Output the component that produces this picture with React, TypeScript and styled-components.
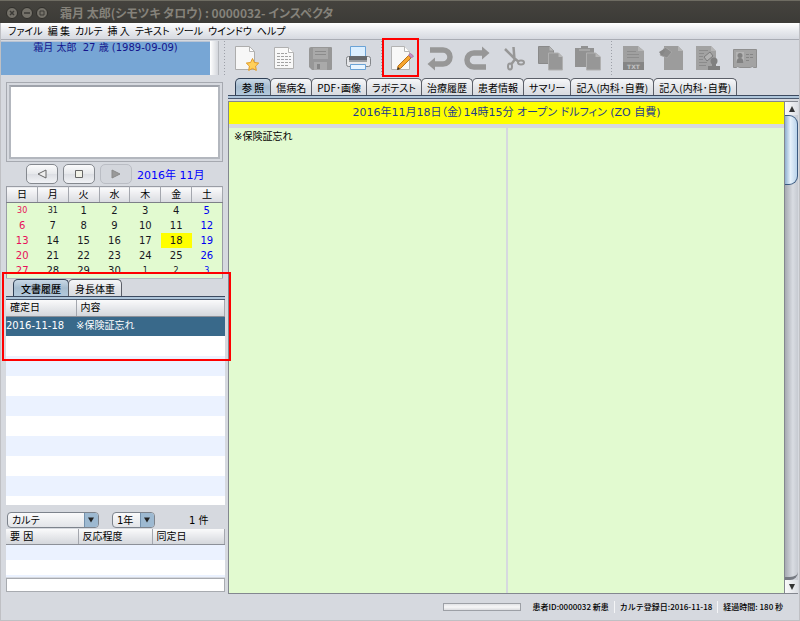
import React from 'react';
import styled, { createGlobalStyle, css } from 'styled-components';

const Global = createGlobalStyle`
  *, *::before, *::after { box-sizing: border-box; }
  body { margin: 0; background: #d6d9df; }
  body, button, input, select, textarea {
    font-family: "DejaVu Sans", "Noto Sans CJK JP", sans-serif;
    font-size: 10px;
    line-height: 14px;
    color: #000;
  }
  button { padding: 0; border: 0; background: none; }
  svg { display: block; }
`;

const Window = styled.div`
  min-height: 100vh;
  display: flex;
  flex-direction: column;
  background: #d6d9df;
  border: 1px solid #bfc0c4;
  border-top: 0;
`;

/* ---------- title bar and menu ---------- */

const TitleBar = styled.header`
  height: 23px;
  display: flex;
  align-items: center;
  gap: 3px;
  padding: 1px 0 0 6px;
  margin: 0 -1px;
  background: linear-gradient(#45433e, #3c3b37);
  border-top: 1px solid #6e6c62;
`;

const WindowButton = styled.button`
  width: 12px;
  height: 12px;
  border-radius: 50%;
  background: #75726a;
  border: 1px solid #2f2e2a;
  svg { width: 10px; height: 10px; }
`;

const Title = styled.h1`
  margin: 0 0 0 9px;
  font: bold 12px/18px "Noto Sans CJK JP", sans-serif;
  font-feature-settings: "palt";
  color: #85827a;
  white-space: pre;
`;

const MenuBar = styled.nav`
  height: 17px;
  display: flex;
  align-items: center;
  gap: 5px;
  padding-left: 7px;
  background: linear-gradient(#fff, #e8eaee 50%, #d6d9e0);
  border-bottom: 1px solid #a9acb4;
`;

const MenuItem = styled.button`
  font: 10px/14px "Noto Sans CJK JP", sans-serif;
  font-feature-settings: "palt";
  white-space: pre;
`;

/* ---------- frame ---------- */

const Body = styled.div`
  flex: 1;
  display: grid;
  grid-template-columns: 227px minmax(0, 1fr);
`;

const Sidebar = styled.aside`
  display: flex;
  flex-direction: column;
  min-width: 0;
`;

const Main = styled.main`
  display: flex;
  flex-direction: column;
  min-width: 0;
`;

/* ---------- sidebar: patient, memo, calendar ---------- */

const PatientBar = styled.div`
  height: 34px;
  margin: 1px 2px 0 0;
  display: flex;
`;

const Patient = styled.div`
  flex: 1;
  background: #77a6d5;
  border-top: 1px solid #b9c4d4;
  color: #14148c;
  text-align: center;
  line-height: 12px;
  white-space: pre;
`;

const PatientEdge = styled.div`
  width: 9px;
  background: linear-gradient(90deg, #fff, #d3d6dc);
  border-right: 1px solid #b4b7bd;
`;

const MemoFrame = styled.div`
  display: flex;
  margin: 7px 5px 0;
  padding: 2px;
  border: 1px solid #a6a9b0;
`;

const Memo = styled.textarea`
  flex: 1;
  min-width: 0;
  height: 74px;
  border: 2px solid #b3b7be;
  border-top-color: #9fa3ab;
  background: #fff;
  resize: none;
  outline: 0;
`;

const CalendarNav = styled.div`
  display: flex;
  align-items: center;
  gap: 5px;
  margin: 2px 0 2px 25px;
`;

const NavButton = styled.button`
  width: 32px;
  height: 20px;
  display: grid;
  place-items: center;
  border: 1px solid #85898f;
  border-radius: 5px;
  background: linear-gradient(#fbfbfc, #e6e8eb 50%, #dcdee3 51%, #f2f3f6);
  &:disabled { border-color: #babdc4; background: #d3d6dc; }
`;

const Month = styled.span`
  padding-top: 3px;
  font-size: 11px;
  line-height: 16px;
  color: #00f;
  white-space: pre;
`;

const Calendar = styled.table`
  width: 217px;
  margin-left: 5px;
  table-layout: fixed;
  border-collapse: collapse;
  background: #e2fad0;
  border: 1px solid #9a9da5;
  border-bottom-color: #b6bac2;
`;

const WeekHead = styled.th`
  height: 16px;
  padding: 0;
  font-weight: normal;
  line-height: 15px;
  background: linear-gradient(#fbfbfc, #d9dbe0);
  border-right: 1px solid #a4a7ae;
  border-bottom: 1px solid #7d8088;
`;

type DayTone = 'sun' | 'week' | 'sat';
const dayColor = { sun: '#e8105a', week: '#17171f', sat: '#0000f0' };

const Day = styled.td<{ $tone: DayTone; $other: boolean; $today: boolean }>`
  height: 15px;
  padding: 0;
  text-align: center;
  line-height: 15px;
  font-size: ${p => (p.$other ? 8 : 10)}px;
  color: ${p => dayColor[p.$tone]};
  background: ${p => (p.$today ? '#ff0' : 'transparent')};
`;

/* ---------- tabs ---------- */

const Tabs = styled.div<{ $indent: number }>`
  display: flex;
  align-items: flex-end;
  padding-left: ${p => p.$indent}px;
  border-bottom: 1px solid #3c4a60;
`;

const Tab = styled.button<{ $active?: boolean }>`
  height: 17px;
  padding: 0 5px;
  border: 1px solid #5b5f68;
  border-bottom: 0;
  border-radius: 5px 5px 0 0;
  margin-right: -1px;
  font: 10px/15px "Noto Sans CJK JP", sans-serif;
  font-feature-settings: "palt";
  white-space: pre;
  background: linear-gradient(#f6f7f9, #e4e6ea 50%, #d8dbe0);
  ${p => p.$active && css`
    padding: 0 6px;
    font-weight: 500;
    border-color: #2f3f55;
    background: linear-gradient(#c9d8e6, #a6bccf 50%, #b3c9dc);
  `}
`;

const SideTab = styled(Tab)`
  padding: 0 ${p => (p.$active ? 7 : 6)}px;
`;

const TabRail = styled.div`
  height: 3px;
  background: #aec5da;
  border-bottom: 1px solid #4b5a70;
`;

/* ---------- sidebar: history ---------- */

const History = styled.section`
  position: relative;
  flex: 1;
  display: flex;
  flex-direction: column;
  margin: 0 3px 0 5px;
`;

const Highlight = styled.div`
  position: absolute;
  z-index: 2;
  inset: -7px -6px auto -4px;
  height: 89px;
  border: 2px solid #f00;
  pointer-events: none;
`;

const Grid = styled.table`
  width: 100%;
  table-layout: fixed;
  border-collapse: collapse;
`;

const HeadCell = styled.th<{ $width?: number }>`
  height: 16px;
  width: ${p => (p.$width ? `${p.$width}px` : 'auto')};
  padding: 1px 0 0 4px;
  text-align: left;
  font-weight: normal;
  line-height: 14px;
  white-space: pre;
  background: linear-gradient(#fafafb, #d4d7dc);
  border-right: 1px solid #a4a7ae;
  border-bottom: 1px solid #8c9098;
`;

const SelectedCell = styled.td`
  height: 20px;
  padding: 0;
  color: #fff;
  background: #39698a;
`;

const Stripes = styled.div<{ $step: number; $first: string; $second: string; $fixed?: number }>`
  flex: ${p => (p.$fixed ? 'none' : '1')};
  height: ${p => (p.$fixed ? `${p.$fixed}px` : 'auto')};
  background: repeating-linear-gradient(
    ${p => p.$first} 0 ${p => p.$step}px,
    ${p => p.$second} ${p => p.$step}px ${p => p.$step * 2}px
  );
`;

const FilterRow = styled.div`
  display: flex;
  align-items: center;
  gap: 13px;
  margin: 7px 0 1px 6px;
`;

const SelectBox = styled.span<{ $width: number }>`
  position: relative;
  width: ${p => p.$width}px;
  select {
    display: block;
    width: 100%;
    height: 16px;
    padding: 1px 0 0 4px;
    appearance: none;
    border: 1px solid #7d838c;
    border-radius: 4px;
    font: 10px/14px "DejaVu Sans", "Noto Sans CJK JP", sans-serif;
    font-feature-settings: "palt";
    background: linear-gradient(#fafafb, #e2e4e8);
  }
  svg {
    position: absolute;
    right: 1px;
    top: 1px;
    pointer-events: none;
  }
`;

const Count = styled.span`
  margin-left: 21px;
  padding-top: 2px;
  white-space: pre;
`;

const Allergy = styled.section`
  margin: 0 3px 2px 5px;
`;

const NoteInput = styled.input`
  display: block;
  width: 100%;
  height: 14px;
  margin-top: 1px;
  border: 1px solid #a8abb0;
  background: #fff;
  outline: 0;
`;

/* ---------- toolbar ---------- */

const Toolbar = styled.div`
  height: 35px;
  display: flex;
  align-items: center;
`;

const Divider = styled.span<{ $width: number }>`
  flex: none;
  width: ${p => p.$width}px;
  height: 34px;
  background: repeating-linear-gradient(#9da0a8 0 1px, #d6d9df 1px 3px) 5px 0 / 1px 100% no-repeat;
`;

const ToolButton = styled.button<{ $marked?: boolean }>`
  position: relative;
  flex: none;
  width: 37px;
  height: 35px;
  display: grid;
  place-items: center;
  ${p => p.$marked && css`
    margin-right: 2px;
    &::after {
      content: "";
      position: absolute;
      inset: -2px 0;
      border: 2px solid #f00;
    }
  `}
`;

/* ---------- document ---------- */

const TabArea = styled.div`
  margin-top: 3px;
`;

const Document = styled.div`
  flex: 1;
  display: grid;
  grid-template-columns: minmax(0, 1fr) 13px;
  margin: 2px 1px 0 0;
  border: 1px solid #83878f;
  border-right: 0;
`;

const Sheet = styled.article`
  display: flex;
  flex-direction: column;
  border-right: 1px solid #83878f;
`;

const SheetTitle = styled.h2`
  margin: 0;
  height: 22px;
  text-align: center;
  font: 11px/22px "DejaVu Sans", "Noto Sans CJK JP", sans-serif;
  font-feature-settings: "palt";
  color: #1e3c8c;
  background: #ff0;
  white-space: pre;
`;

const Panes = styled.div`
  flex: 1;
  margin-top: 4px;
  display: grid;
  grid-template-columns: 1fr 1fr;
  gap: 2px;
`;

const Pane = styled.div`
  padding: 2px 5px;
  background: #e2fad0;
  font-feature-settings: "palt";
`;

const ScrollBar = styled.div`
  display: flex;
  flex-direction: column;
  align-items: stretch;
  background: linear-gradient(90deg, #a6aab2, #d9dce2 60%, #c6cad1);
`;

const ScrollArrow = styled.button`
  height: 13px;
  display: grid;
  place-items: center;
  background: linear-gradient(90deg, #fafafb, #dcdfe4);
`;

const ScrollThumb = styled.div`
  height: 70px;
  border: 1px solid #3a5a80;
  border-left: 0;
  border-radius: 0 9px 9px 0;
  background: linear-gradient(90deg, #8fb0d0, #e6f1fb 45%, #b9d3ea);
`;

const ScrollTrack = styled.div`
  flex: 1;
  border-bottom: 3px solid #777b83;
  border-radius: 0 0 8px 0;
`;

/* ---------- status bar ---------- */

const StatusBar = styled.footer`
  height: 26px;
  display: flex;
  align-items: center;
  justify-content: flex-end;
  padding-right: 16px;
`;

const Progress = styled.div`
  width: 78px;
  height: 8px;
  margin-right: 12px;
  border: 1px solid #9da0a6;
  background: linear-gradient(#e2e3e6, #f7f7f8 50%, #dcdde0);
`;

const StatusItem = styled.span`
  font: 500 8px/12px "Noto Sans CJK JP", sans-serif;
  white-space: pre;
  & + & {
    margin-left: 5px;
    padding-left: 5px;
    border-left: 1px solid #f4f5f7;
  }
`;

/* ---------- icons ---------- */

const G = '#979797';

const Svg = ({ children }: { children: React.ReactNode }) => (
  <svg width="26" height="26" viewBox="0 0 26 26" fill="none">{children}</svg>
);

const NewDoc = () => (
  <Svg>
    <path d="M1.500 1.500h14l5 5v18h-19z" fill="#f7f7f7" stroke="#adadad" />
    <path d="M15.500 1.500v5h5z" fill="#fff" stroke="#b5b5b5" />
    <path d="M18.500 13.500l1.900 4 4.300.6-3.100 3 .7 4.300-3.800-2-3.800 2 .7-4.300-3.100-3 4.300-.6z" fill="#ffd05a" stroke="#e09a26" />
  </Svg>
);

const TextDoc = () => (
  <Svg>
    <path d="M3.500 2.500h14l5 5v16h-19z" fill="#f8f8f8" stroke="#b0b0b0" />
    <path d="M17.500 2.500v5h5" fill="#fff" stroke="#b5b5b5" />
    <path d="M6 8.500h10M6 11.500h14M6 14.500h14M6 17.500h14M6 20.500h11" stroke="#a2a2a2" strokeDasharray="3 1" />
  </Svg>
);

const Floppy = () => (
  <Svg>
    <path d="M3 2h20q1 0 1 1v21q0 1-1 1H4l-3-3V4q0-2 2-2z" fill={G} />
    <path d="M5 3h15v11H5z" fill="#a9a9a9" />
    <path d="M7 6.500h11M7 9.500h11" stroke="#8b8b8b" />
    <path d="M6 17h13v8H6z" fill="#aaa" />
    <path d="M9 19h3v5H9z" fill="#858585" />
  </Svg>
);

const Printer = () => (
  <Svg>
    <rect x="1.500" y="11.500" width="24" height="10" rx="2" fill="#e6e7ea" stroke="#83868a" />
    <path d="M5.500 1.500h15v10h-15z" fill="#dcefff" stroke="#6ba3d6" />
    <path d="M4 11h18v4H4z" fill="#66696d" />
    <path d="M4 15h18v2H4z" fill="#9a9da1" />
    <path d="M5.500 19.500h15v5h-15z" fill="#e8f5ff" stroke="#6ba3d6" />
  </Svg>
);

const EditDoc = () => (
  <Svg>
    <path d="M3.500 1.500h13l5 5v18h-18z" fill="#f8f8f8" stroke="#b3b3b3" />
    <path d="M16.500 1.500v5h5" fill="#fff" stroke="#b5b5b5" />
    <path d="M10 21L20.500 10.500l2.500 2.500L12.500 23.500l-3 1z" fill="#f7a52f" stroke="#b9741b" />
    <path d="M20.500 10l2-1.500 3 2.500-2 2z" fill="#c68bc4" stroke="#a976a8" />
    <path d="M9 25l1-3 2 2z" fill="#333" />
  </Svg>
);

const Undo = () => (
  <Svg>
    <path d="M3 5h13a7 7 0 0 1 0 14H7" stroke={G} strokeWidth="5.500" />
    <path d="M0.500 19L8 12.500v13z" fill={G} />
  </Svg>
);

const Redo = () => (
  <Svg>
    <path d="M22 22H10a7 7 0 0 1 0-14h8" stroke={G} strokeWidth="5.500" />
    <path d="M25.500 8L18 1.500v13z" fill={G} />
  </Svg>
);

const Scissors = () => (
  <Svg>
    <path d="M12.500 2l1 13-3 4M4 4l9 9 5 4" stroke={G} strokeWidth="2.500" />
    <ellipse cx="9" cy="21.500" rx="2" ry="3" stroke={G} strokeWidth="2" />
    <ellipse cx="20" cy="17.500" rx="3" ry="2" stroke={G} strokeWidth="2" />
  </Svg>
);

const Copy = () => (
  <Svg>
    <path d="M0.500 1.500h11l4 4v13h-15z" fill={G} stroke="#8a8a8a" />
    <path d="M11.500 1.500v4h4" fill="#b8b8b8" />
    <path d="M10.500 8h10l4 4v13h-14z" fill={G} stroke="#b0b0b0" />
    <path d="M20.500 8v4h4" fill="#b8b8b8" />
  </Svg>
);

const Paste = () => (
  <Svg>
    <path d="M0 3h6V1h7v2h6v19H0z" fill="#929292" />
    <path d="M4 5h11" stroke="#a6a6a6" strokeWidth="2" />
    <path d="M11.500 8h9l5 4v13h-14z" fill={G} stroke="#b0b0b0" />
    <path d="M20.500 8v4h5" fill="#b8b8b8" />
  </Svg>
);

const TxtFile = () => (
  <Svg>
    <path d="M2 1h15l6 5v19H2z" fill="#a0a0a0" />
    <path d="M17 1v5h6z" fill="#b5b5b5" />
    <path d="M6 6.500h9M6 9.500h12M6 12.500h12" stroke="#8d8d8d" />
    <path d="M2 17h21v8H2z" fill="#858585" />
    <text x="12.500" y="23.500" fontSize="6" fontWeight="bold" textAnchor="middle" fill="#c2c2c2" fontFamily="DejaVu Sans, sans-serif">TXT</text>
  </Svg>
);

const PaintDoc = () => (
  <Svg>
    <path d="M6 1h14l5 5v19H6z" fill="#9c9c9c" />
    <path d="M20 1v5h5z" fill="#b4b4b4" />
    <path d="M7 2l7 5-5 6-7-3z" fill="#8c8c8c" stroke="#a6a6a6" />
    <path d="M1 7l5-3 1 2-3 5z" fill="#868686" />
  </Svg>
);

const StampDoc = () => (
  <Svg>
    <path d="M1 1h15l5 5v19H1z" fill="#a2a2a2" />
    <path d="M16 1v5h5z" fill="#b5b5b5" />
    <path d="M4 5.500h9M4 8.500h5M4 11.500h4M4 14.500h4M4 17.500h8M4 20.500h7" stroke="#8b8b8b" />
    <path d="M9 12l6-5 3 4-6 5z" stroke="#7c7c7c" fill="#b2b2b2" />
    <circle cx="19" cy="16" r="3.500" fill="#808080" />
    <path d="M17 18h4v3h4v4H13v-4h4z" fill="#808080" />
  </Svg>
);

const IdCard = () => (
  <Svg>
    <path d="M1.500 4.500h23v18h-3q-1-2-3 0h-11q-2-2-3 0h-3z" fill="#a3a3a3" stroke="#8f8f8f" />
    <path d="M4 7h8v11H4z" fill="#b4b4b4" />
    <circle cx="8" cy="10.500" r="2.500" fill="#818181" />
    <path d="M4.500 18q0-5 3.500-5t3.500 5z" fill="#818181" />
    <path d="M14 9.500h8M14 12.500h8M14 15.500h4" stroke="#858585" strokeDasharray="3 1" />
  </Svg>
);

const toolGroups: { label: string; icon: React.FC; marked?: boolean }[][] = [
  [
    { label: '新規', icon: NewDoc },
    { label: '開く', icon: TextDoc },
    { label: '保存', icon: Floppy },
    { label: '印刷', icon: Printer },
  ],
  [
    { label: '編集', icon: EditDoc, marked: true },
    { label: '元に戻す', icon: Undo },
    { label: 'やり直し', icon: Redo },
    { label: '切り取り', icon: Scissors },
    { label: 'コピー', icon: Copy },
    { label: '貼り付け', icon: Paste },
  ],
  [
    { label: 'テキスト', icon: TxtFile },
    { label: 'シェーマ', icon: PaintDoc },
    { label: 'スタンプ', icon: StampDoc },
    { label: '保険', icon: IdCard },
  ],
];

const menus = ['ファイル', '編 集', 'カルテ', '挿 入', 'テキスト', 'ツール', 'ウインドウ', 'ヘルプ'];
const chartTabs = ['参 照', '傷病名', 'PDF･画像', 'ラボテスト', '治療履歴', '患者情報', 'サマリー', '記入(内科･自費)', '記入(内科･自費)'];
const weekdays = ['日', '月', '火', '水', '木', '金', '土'];
const firstSunday = new Date(2016, 9, 30);

const weeks = Array.from({ length: 5 }, (_, w) =>
  Array.from({ length: 7 }, (_, d) => {
    const date = new Date(firstSunday);
    date.setDate(date.getDate() + w * 7 + d);
    return {
      day: date.getDate(),
      other: date.getMonth() !== 10,
      tone: (d === 0 ? 'sun' : d === 6 ? 'sat' : 'week') as DayTone,
    };
  }),
);

const SelectArrow = () => (
  <svg width="14" height="14" viewBox="0 0 14 14">
    <path d="M0 0h11q3 0 3 3v8q0 3-3 3H0z" fill="#9db9d1" />
    <path d="M.5 0v14" stroke="#7391ad" />
    <path d="M4 4.500h6l-3 5z" fill="#222" />
  </svg>
);

export default function App() {
  return (
    <Window>
      <Global />
      <TitleBar>
        <WindowButton aria-label="閉じる">
          <svg viewBox="0 0 10 10"><path d="M3 3l4 4M7 3L3 7" stroke="#3c3b37" strokeWidth="1.500" /></svg>
        </WindowButton>
        <WindowButton aria-label="最小化">
          <svg viewBox="0 0 10 10"><path d="M2 5h6" stroke="#3c3b37" strokeWidth="1.500" /></svg>
        </WindowButton>
        <WindowButton aria-label="最大化">
          <svg viewBox="0 0 10 10"><path d="M3 3h4v4H3z" stroke="#3c3b37" fill="none" /></svg>
        </WindowButton>
        <Title>霜月 太郎(シモツキ タロウ) : 0000032- インスペクタ</Title>
      </TitleBar>
      <MenuBar>
        {menus.map(m => <MenuItem key={m}>{m}</MenuItem>)}
      </MenuBar>

      <Body>
        <Sidebar>
          <PatientBar>
            <Patient>霜月 太郎  27 歳 (1989-09-09)</Patient>
            <PatientEdge />
            <Divider $width={7} />
          </PatientBar>
          <MemoFrame><Memo aria-label="メモ" /></MemoFrame>
          <CalendarNav>
            <NavButton aria-label="前の月">
              <svg width="10" height="10" viewBox="0 0 10 10"><path d="M9 1v8L1 5z" fill="#eee" stroke="#666" /></svg>
            </NavButton>
            <NavButton aria-label="今月">
              <svg width="10" height="10" viewBox="0 0 10 10"><path d="M1.500 1.500h7v7h-7z" fill="#f2f2e8" stroke="#666" /></svg>
            </NavButton>
            <NavButton aria-label="次の月" disabled>
              <svg width="10" height="10" viewBox="0 0 10 10"><path d="M1 1v8l8-4z" fill="#999" stroke="#8a8a8a" /></svg>
            </NavButton>
            <Month>2016年 11月</Month>
          </CalendarNav>
          <Calendar>
            <thead>
              <tr>{weekdays.map(d => <WeekHead key={d}>{d}</WeekHead>)}</tr>
            </thead>
            <tbody>
              {weeks.map((week, i) => (
                <tr key={i}>
                  {week.map(c => (
                    <Day key={c.day} $tone={c.tone} $other={c.other} $today={c.day === 18}>{c.day}</Day>
                  ))}
                </tr>
              ))}
            </tbody>
          </Calendar>

          <History>
            <Highlight />
            <Tabs $indent={7} role="tablist">
              <SideTab role="tab" aria-selected $active>文書履歴</SideTab>
              <SideTab role="tab">身長体重</SideTab>
            </Tabs>
            <TabRail />
            <Grid>
              <thead>
                <tr>
                  <HeadCell $width={70}>確定日</HeadCell>
                  <HeadCell>内容</HeadCell>
                </tr>
              </thead>
              <tbody>
                <tr>
                  <SelectedCell>2016-11-18</SelectedCell>
                  <SelectedCell>※保険証忘れ</SelectedCell>
                </tr>
              </tbody>
            </Grid>
            <Stripes $step={20} $first="#fff" $second="#ebf2ff" />
          </History>

          <FilterRow>
            <SelectBox $width={92}>
              <select aria-label="文書種別"><option>カルテ</option></select>
              <SelectArrow />
            </SelectBox>
            <SelectBox $width={43}>
              <select aria-label="期間"><option>1年</option></select>
              <SelectArrow />
            </SelectBox>
            <Count>1 件</Count>
          </FilterRow>

          <Allergy>
            <Grid>
              <thead>
                <tr>
                  <HeadCell $width={72}>要 因</HeadCell>
                  <HeadCell $width={74}>反応程度</HeadCell>
                  <HeadCell>同定日</HeadCell>
                </tr>
              </thead>
            </Grid>
            <Stripes $step={15} $first="#ebf2ff" $second="#fff" $fixed={32} />
            <NoteInput aria-label="アレルギーメモ" />
          </Allergy>
        </Sidebar>

        <Main>
          <Toolbar>
            {toolGroups.map((group, g) => (
              <React.Fragment key={g}>
                {g > 0 && <Divider $width={g === 1 ? 6 : 9} />}
                {group.map(({ label, icon: Icon, marked }) => (
                  <ToolButton key={label} aria-label={label} $marked={marked}><Icon /></ToolButton>
                ))}
              </React.Fragment>
            ))}
          </Toolbar>
          <TabArea>
            <Tabs $indent={7} role="tablist">
              {chartTabs.map((t, i) => (
                <Tab key={i} role="tab" aria-selected={i === 0} $active={i === 0}>{t}</Tab>
              ))}
            </Tabs>
            <TabRail />
          </TabArea>
          <Document>
            <Sheet>
              <SheetTitle>2016年11月18日（金）14時15分 オープン ドルフィン (ZO 自費)</SheetTitle>
              <Panes>
                <Pane>※保険証忘れ</Pane>
                <Pane />
              </Panes>
            </Sheet>
            <ScrollBar>
              <ScrollArrow aria-label="上へ">
                <svg width="8" height="8" viewBox="0 0 8 8"><path d="M4 1l3 6H1z" fill="#333" /></svg>
              </ScrollArrow>
              <ScrollThumb />
              <ScrollTrack />
              <ScrollArrow aria-label="下へ">
                <svg width="8" height="8" viewBox="0 0 8 8"><path d="M4 7l3-6H1z" fill="#333" /></svg>
              </ScrollArrow>
            </ScrollBar>
          </Document>
        </Main>
      </Body>

      <StatusBar>
        <Progress role="progressbar" aria-label="進捗" />
        <StatusItem>患者ID:0000032 新患</StatusItem>
        <StatusItem>カルテ登録日:2016-11-18</StatusItem>
        <StatusItem>経過時間: 180 秒</StatusItem>
      </StatusBar>
    </Window>
  );
}
